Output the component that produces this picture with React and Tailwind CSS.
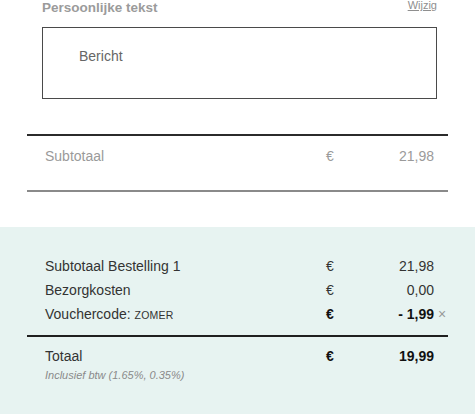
import React from "react";

const rows = [
  { label: "Subtotaal Bestelling 1", amount: "21,98" },
  { label: "Bezorgkosten", amount: "0,00" },
];

const App = () => {
  return (
    <div className="w-[475px] min-h-[415px] bg-white text-[14px] font-['Liberation_Sans',Arial,sans-serif]">
      {/* persoonlijke tekst */}
      <div className="pl-[42px] pr-[38px]">
        <div className="flex items-start justify-between h-[27px]">
          <span className="font-bold text-[#9b9b9b] text-[13.5px] leading-[16px]">
            Persoonlijke tekst
          </span>
          <a className="text-[11px] leading-[11px] text-[#8f8f8f] underline">
            Wijzig
          </a>
        </div>
        <div className="h-[72px] border border-[#4a4a4a] pl-[36px] pt-[20px] text-[#666] leading-[17px]">
          Bericht
        </div>
      </div>

      {/* subtotaal */}
      <div className="mx-[27px] mt-[35px] border-t-2 border-b-2 border-t-[#2b2b2b] border-b-[#8a8a8a] h-[58px] pt-[12px] flex items-start pl-[18px] pr-[14px] text-[#9a9a9a] leading-[17px]">
        <span className="flex-1">Subtotaal</span>
        <div className="w-[108px] flex justify-between">
          <span>€</span>
          <span>21,98</span>
        </div>
      </div>

      {/* totalen */}
      <div className="mt-[35px] bg-[#e7f3f1] pt-[27px] pb-[32px]">
        <div className="mx-[27px]">
          <div className="pl-[18px] pr-[14px] pb-[8px] text-[#333] leading-[24px]">
            {rows.map((r) => (
              <div key={r.label} className="flex">
                <span className="flex-1">{r.label}</span>
                <div className="w-[108px] flex justify-between">
                  <span>€</span>
                  <span>{r.amount}</span>
                </div>
              </div>
            ))}
            <div className="flex">
              <span className="flex-1">
                Vouchercode: <span className="text-[10.5px] tracking-[0.2px]">ZOMER</span>
              </span>
              <div className="w-[108px] flex justify-between font-bold text-[#111] relative">
                <span>€</span>
                <span>- 1,99</span>
                <span className="absolute left-full ml-[4px] top-0 font-normal text-[#999] text-[14px]">
                  ×
                </span>
              </div>
            </div>
          </div>
          <div className="border-t-2 border-[#1f1f1f] pt-[11px] pl-[18px] pr-[14px]">
            <div className="flex text-[#333] leading-[16px]">
              <span className="flex-1">Totaal</span>
              <div className="w-[108px] flex justify-between font-bold text-[#111]">
                <span>€</span>
                <span>19,99</span>
              </div>
            </div>
            <div className="mt-[5px] text-[11px] leading-[13px] italic text-[#8a8a8a]">
              Inclusief btw (1.65%, 0.35%)
            </div>
          </div>
        </div>
      </div>
    </div>
  );
};

export default App;
